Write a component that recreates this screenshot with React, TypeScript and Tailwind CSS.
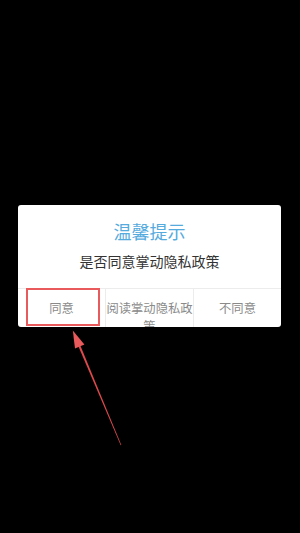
import React from "react";

const buttons = ["同意", "阅读掌动隐私政策", "不同意"];

export default function App() {
    return (
        <div
            className="relative h-[533px] w-[300px] overflow-hidden bg-black pt-[205px]"
            style={{ fontFamily: '"Noto Sans CJK SC", "Noto Sans", sans-serif' }}
        >
            <div className="mx-[18px] w-[263px] overflow-hidden rounded-[3px] bg-white">
                <div className="flex flex-col items-center pb-[17px] pt-[14px]">
                    <div className="text-[18px] leading-[24px] text-[#55aade]">温馨提示</div>
                    <div className="mt-[8px] text-[14px] leading-[20px] text-[#333333]">
                        是否同意掌动隐私政策
                    </div>
                </div>
                <div className="flex h-[39px] border-t border-[#ececec]">
                    {buttons.map((label, i) => (
                        <div
                            key={label}
                            className={
                                "flex-1 pt-[10px] text-center text-[12.3px] leading-[18px] text-[#8a8a8a]" +
                                (i > 0 ? " border-l border-[#ececec]" : "")
                            }
                        >
                            {label}
                        </div>
                    ))}
                </div>
            </div>

            {/* annotation box */}
            <div className="absolute left-[26px] top-[288px] h-[38px] w-[74px] border-2 border-[#e85a5c]" />

            {/* annotation arrow */}
            <svg className="absolute left-0 top-0" width="300" height="533" viewBox="0 0 300 533">
                <polygon points="77.4,344 79.4,343.2 121.3,445 120.7,445.2" fill="#e04a4c" />
                <polygon points="72.8,330.5 84.4,344.6 75,348.6" fill="#e85a5c" />
            </svg>
        </div>
    );
}
